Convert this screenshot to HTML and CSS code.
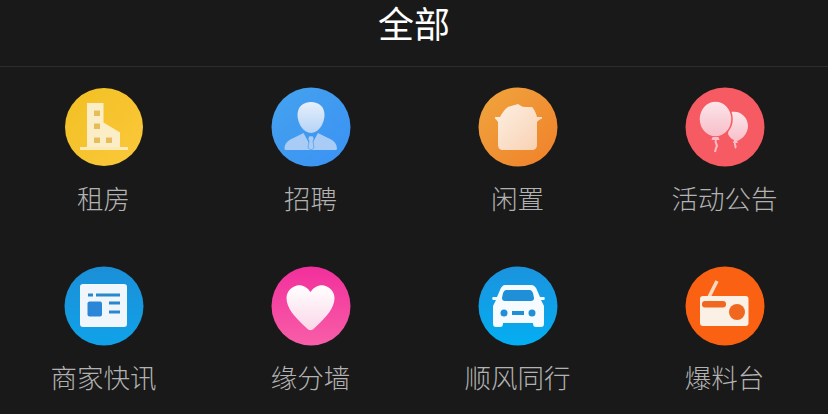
FILE: index.html
```html
<!DOCTYPE html>
<html lang="zh-CN">
<head>
<meta charset="utf-8">
<title>全部</title>
<link rel="stylesheet" href="styles.css">
</head>
<body>
<header class="topbar"><h1 class="title">全部</h1></header>
<main class="grid">
  <div class="item">
    <svg class="icon" viewBox="0 0 80 80"><defs><linearGradient id="g1" x1="0" y1="0" x2="1" y2="1"><stop offset="0" stop-color="#f1c022"/><stop offset="1" stop-color="#fcc83c"/></linearGradient></defs>
      <circle cx="40" cy="40" r="39" fill="url(#g1)"/>
      <path d="M23 16h16.500v19.500L56 45.500V60H23z" fill="#fbeec6"/>
      <path d="M16 60h48v3H16z" fill="#fbeab8"/>
      <path d="M30 23.500h6v5.500h-6zM30 36.500h6v5.500h-6zM30 50.500h6v5.500h-6zM42 50.500h6v5.500h-6z" fill="#e6bd58"/>
    </svg>
    <span class="label">租房</span>
  </div>
  <div class="item">
    <svg class="icon" viewBox="0 0 80 80"><defs><linearGradient id="g2" x1="0" y1="0" x2="1" y2="1"><stop offset="0" stop-color="#45a2ee"/><stop offset="1" stop-color="#3a92f4"/></linearGradient><linearGradient id="w2" x1="0" y1="0" x2="0" y2="1"><stop offset="0" stop-color="#e6f0fb"/><stop offset="1" stop-color="#b5d3f6"/></linearGradient></defs>
      <circle cx="40" cy="40" r="39.500" fill="url(#g2)"/>
      <path d="M40 15c8 0 13.500 5 13.500 13 0 9-6.500 18-13.500 18s-13.500-9-13.500-18c0-8 5.500-13 13.500-13z" fill="url(#w2)"/>
      <path d="M13.500 62c0-6 4-9 9-11l10-5 5 9 2.500 8H15.500c-1 0-2-.500-2-1zM66 62c0-6-4-9-9-11l-10-5-5 9-2 8h24c1 0 2-.500 2-1z" fill="#a8ccf5"/>
      <path d="M38 49h4l1 3-1 2 1 7-3 2-3-2 1-7-1-2z" fill="#a8ccf5" stroke="#3f97ee" stroke-width=".6"/>
    </svg>
    <span class="label">招聘</span>
  </div>
  <div class="item">
    <svg class="icon" viewBox="0 0 80 80"><defs><linearGradient id="g3" x1="0" y1="0" x2="1" y2="1"><stop offset="0" stop-color="#f0a53e"/><stop offset="1" stop-color="#f0802a"/></linearGradient><linearGradient id="w3" x1="0" y1="0" x2="1" y2="1"><stop offset="0" stop-color="#fdf0e4"/><stop offset="1" stop-color="#f8d0b0"/></linearGradient></defs>
      <circle cx="40" cy="40" r="39.500" fill="url(#g3)"/>
      <path d="M17 30h5c2-4 5-8 8-10 3-1 7-2 10-3 2 1 4 3 7 3h7c2 2 4 6 5 10h5v1.500c-2 1-4 2-5 3.500v23c0 3-2 5-5 5H25c-3 0-5-2-5-5V35c-1-1.500-2-2.500-3-3.500z" fill="url(#w3)"/>
    </svg>
    <span class="label">闲置</span>
  </div>
  <div class="item">
    <svg class="icon" viewBox="0 0 80 80"><defs><linearGradient id="w4" x1="0" y1="0" x2="0" y2="1"><stop offset="0" stop-color="#fbe6ea"/><stop offset="1" stop-color="#f8bdc8"/></linearGradient></defs>
      <circle cx="40" cy="40" r="39.500" fill="#f65a62"/>
      <path d="M46 25c9-2 17 5 17 14 0 8-7 14-11 15l1 2h-5l1-3c-3-1-5-4-6-6z" fill="url(#w4)"/>
      <path d="M50 56c-1 2 2 3 0 5" fill="none" stroke="#f8bdc8" stroke-width="2"/>
      <ellipse cx="30.500" cy="32" rx="16.500" ry="18" fill="url(#w4)" stroke="#f65a62" stroke-width="1.500"/>
      <path d="M27.500 50h6l1 3h-8z" fill="#f8bdc8"/>
      <path d="M31 53c-2 3 3 5 0 8l-1 4" fill="none" stroke="#f8bdc8" stroke-width="2"/>
    </svg>
    <span class="label">活动公告</span>
  </div>
  <div class="item">
    <svg class="icon" viewBox="0 0 80 80"><defs><linearGradient id="g5" x1="0" y1="0" x2="0" y2="1"><stop offset="0" stop-color="#1b8fd8"/><stop offset="1" stop-color="#10a2e8"/></linearGradient></defs>
      <circle cx="40" cy="40" r="39.500" fill="url(#g5)"/>
      <rect x="16" y="18" width="47" height="43" rx="3" fill="#eff7fc"/>
      <path d="M24 27.500h5v3h-5zM32 27.500h24v3H32zM45 35.500h11v3H45zM45 44.500h11v3H45z" fill="#2a87cc"/>
      <rect x="23.500" y="35.500" width="14.500" height="15" rx="2" fill="#2a87d8"/>
    </svg>
    <span class="label">商家快讯</span>
  </div>
  <div class="item">
    <svg class="icon" viewBox="0 0 80 80"><defs><linearGradient id="g6" x1="0" y1="0" x2="0" y2="1"><stop offset="0" stop-color="#f22f9c"/><stop offset="1" stop-color="#f85ea8"/></linearGradient><linearGradient id="w6" x1="0" y1="0" x2="0" y2="1"><stop offset="0" stop-color="#ffffff"/><stop offset="1" stop-color="#fbd7e8"/></linearGradient></defs>
      <circle cx="40" cy="40" r="39.500" fill="url(#g6)"/>
      <path d="M39.500 26C36 21 31 18.500 26 19.500 20 21 15.500 26 15.500 32c0 10 8 19 20 30 3 3 5 3 8 0 12-11 20-20 20-30 0-6-4.500-11-10.500-12.500-5-1-10 1.500-13.500 6.500z" fill="url(#w6)"/>
    </svg>
    <span class="label">缘分墙</span>
  </div>
  <div class="item">
    <svg class="icon" viewBox="0 0 80 80"><defs><linearGradient id="g7" x1="0" y1="0" x2="0" y2="1"><stop offset="0" stop-color="#1b93de"/><stop offset="1" stop-color="#04aef2"/></linearGradient></defs>
      <circle cx="40" cy="40" r="39.500" fill="url(#g7)"/>
      <path d="M27 19h26c3 0 5 2 6 5l3 7h4c1 0 1 3 0 3h-3l3 6v17c0 3-1 4-3 4h-5c-2 0-3-1-3-4H25c0 3-1 4-3 4h-4c-2 0-3-1-3-4V40l3-6h-3c-1 0-1-3 0-3h4l3-7c1-3 3-5 5-5z" fill="#f5fbfe"/>
      <path d="M28 24h24c1 0 2 1 3 3l1 5c0 2-1 3-3 3H27c-2 0-3-1-3-3l1-5c1-2 2-3 3-3z" fill="#1f8fd8"/>
      <circle cx="26" cy="47" r="3.500" fill="#1f8fd8"/><circle cx="54" cy="47" r="3.500" fill="#1f8fd8"/>
      <rect x="34" y="45" width="12" height="4" fill="#1f8fd8"/>
    </svg>
    <span class="label">顺风同行</span>
  </div>
  <div class="item">
    <svg class="icon" viewBox="0 0 80 80">
      <circle cx="40" cy="40" r="39.500" fill="#fb6112"/>
      <path d="M24 31l8-16" stroke="#f9d9c0" stroke-width="3.500" fill="none"/>
      <rect x="15" y="30" width="48.500" height="30" rx="3" fill="#fbf0e6"/>
      <rect x="17" y="35" width="24" height="6.500" rx="3" fill="#f0671f"/>
      <circle cx="52" cy="46" r="8" fill="#f0671f"/>
    </svg>
    <span class="label">爆料台</span>
  </div>
</main>
</body>
</html>
```
FILE: styles.css
```css
* { box-sizing: border-box; }
html, body { margin: 0; height: 100%; }
body {
  width: 828px;
  height: 414px;
  overflow: hidden;
  background: #191919;
  font-family: "Noto Sans CJK SC", "Noto Sans", sans-serif;
}
.topbar {
  height: 67px;
  display: flex;
  justify-content: center;
  align-items: flex-start;
  border-bottom: 1px solid #2d2d2d;
}
.title {
  margin: 0;
  font-family: "Liberation Sans", "Noto Sans CJK SC", sans-serif;
  font-size: 36px;
  line-height: 52px;
  font-weight: 400;
  color: #ffffff;
}
.grid {
  display: grid;
  grid-template-columns: repeat(4, 207px);
  row-gap: 49px;
  padding-top: 20px;
}
.item {
  display: flex;
  flex-direction: column;
  align-items: center;
}
.icon {
  width: 80px;
  height: 80px;
  display: block;
}
.label {
  margin-top: 12px;
  font-size: 26.500px;
  line-height: 38px;
  font-weight: 300;
  color: #b2b2b2;
  white-space: nowrap;
}
```
